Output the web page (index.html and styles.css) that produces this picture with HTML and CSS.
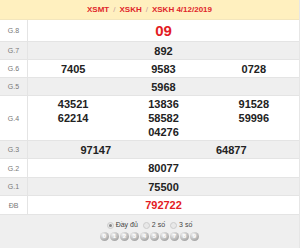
FILE: index.html
```html
<!DOCTYPE html>
<html>
<head>
<meta charset="utf-8">
<link rel="stylesheet" href="styles.css">
</head>
<body>
<div class="box">
  <div class="head">
    <span class="crumb">XSMT</span><span class="sep">/</span><span class="crumb">XSKH</span><span class="sep">/</span><span class="crumb">XSKH 4/12/2019</span>
  </div>
  <div class="row r8">
    <div class="lbl">G.8</div>
    <div class="val"><span class="big">09</span></div>
  </div>
  <div class="row alt">
    <div class="lbl">G.7</div>
    <div class="val"><span>892</span></div>
  </div>
  <div class="row">
    <div class="lbl">G.6</div>
    <div class="val c3"><span>7405</span><span>9583</span><span>0728</span></div>
  </div>
  <div class="row alt">
    <div class="lbl">G.5</div>
    <div class="val"><span>5968</span></div>
  </div>
  <div class="row r4">
    <div class="lbl">G.4</div>
    <div class="val c3 top">
      <div class="col"><span>43521</span><span>62214</span></div>
      <div class="col"><span>13836</span><span>58582</span><span>04276</span></div>
      <div class="col"><span>91528</span><span>59996</span></div>
    </div>
  </div>
  <div class="row alt">
    <div class="lbl">G.3</div>
    <div class="val c2"><span>97147</span><span>64877</span></div>
  </div>
  <div class="row tall">
    <div class="lbl">G.2</div>
    <div class="val"><span>80077</span></div>
  </div>
  <div class="row alt">
    <div class="lbl">G.1</div>
    <div class="val"><span>75500</span></div>
  </div>
  <div class="row tall">
    <div class="lbl">ĐB</div>
    <div class="val"><span class="red">792722</span></div>
  </div>
  <div class="foot">
    <div class="opts">
      <span class="opt"><i class="radio on"></i>Đầy đủ</span>
      <span class="opt"><i class="radio"></i>2 số</span>
      <span class="opt"><i class="radio"></i>3 số</span>
    </div>
    <div class="balls">
      <span class="ball">0</span><span class="ball">1</span><span class="ball">2</span><span class="ball">3</span><span class="ball">4</span><span class="ball">5</span><span class="ball">6</span><span class="ball">7</span><span class="ball">8</span><span class="ball">9</span>
    </div>
  </div>
</div>
</body>
</html>
```

FILE: styles.css
```css
html, body {
  margin: 0;
  padding: 0;
  background: #fff;
}
body {
  font-family: "Liberation Sans", Arial, sans-serif;
  width: 300px;
  height: 249px;
  overflow: hidden;
}
.box {
  width: 299px;
  border-right: 1px solid #e6e6e6;
}
.head {
  height: 19px;
  background: #fff0bf;
  border-bottom: 1px solid #f3e6bd;
  display: flex;
  justify-content: center;
  align-items: center;
  font-size: 8px;
  font-weight: bold;
  color: #e0262b;
}
.sep {
  color: #c8a0a0;
  font-weight: normal;
  margin: 0 4px;
}
.row {
  display: grid;
  grid-template-columns: 28px 1fr;
  height: 17px;
  border-bottom: 1px solid #e4e4e4;
  background: #fff;
}
.row.alt {
  background: #efefef;
}
.row.r8 {
  height: 21px;
}
.row.r4 {
  height: 44px;
}
.row.tall {
  height: 18px;
}
.lbl {
  border-right: 1px solid #e4e4e4;
  display: flex;
  align-items: center;
  justify-content: center;
  font-size: 7px;
  color: #777;
}
.val {
  display: flex;
  justify-content: center;
  align-items: center;
  font-size: 11px;
  font-weight: bold;
  color: #222;
}
.val.c3 > *, .val.c2 > * {
  flex: 1;
  text-align: center;
}
.val.top {
  align-items: flex-start;
  padding-top: 1px;
}
.col {
  display: flex;
  flex-direction: column;
  align-items: center;
  line-height: 14px;
}
.big {
  font-size: 15px;
  color: #e31b23;
}
.red {
  color: #e31b23;
}
.foot {
  height: 33px;
  background: #efefef;
  display: flex;
  flex-direction: column;
  align-items: center;
  padding-top: 5px;
  box-sizing: border-box;
}
.opts {
  display: flex;
  gap: 5px;
  font-size: 7px;
  color: #444;
  line-height: 10px;
}
.opt {
  display: flex;
  align-items: center;
}
.radio {
  display: inline-block;
  width: 5px;
  height: 5px;
  border-radius: 50%;
  border: 1px solid #ccc;
  background: #e8e8e8;
  margin-right: 2px;
  position: relative;
}
.radio.on::after {
  content: "";
  position: absolute;
  left: 1px;
  top: 1px;
  width: 3px;
  height: 3px;
  border-radius: 50%;
  background: #888;
}
.balls {
  display: flex;
  gap: 1px;
  margin-top: 2px;
}
.ball {
  width: 9px;
  height: 9px;
  border-radius: 50%;
  background: radial-gradient(circle at 35% 30%, #f4f4f4 0%, #c4c4c4 45%, #8a8a8a 100%);
  color: #fff;
  font-size: 6px;
  font-weight: bold;
  line-height: 9px;
  text-align: center;
}
```
